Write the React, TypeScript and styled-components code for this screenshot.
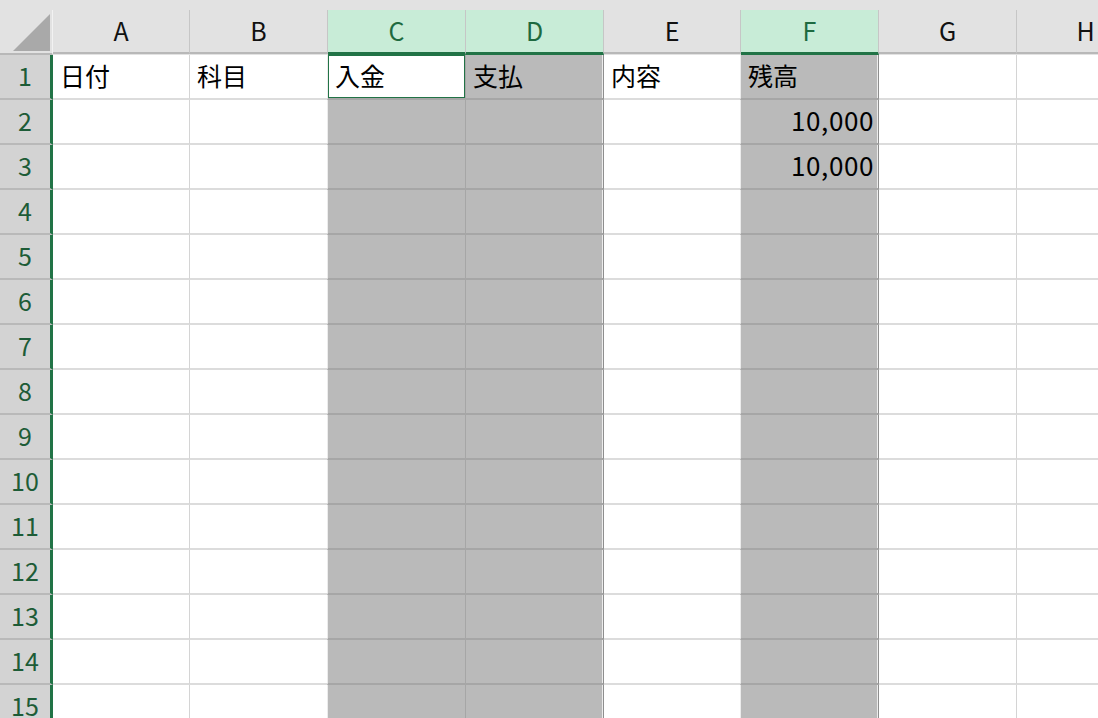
import React from "react";
import styled, { createGlobalStyle } from "styled-components";

const GlobalStyle = createGlobalStyle`
  html, body {
    margin: 0;
    padding: 0;
    background: #ffffff;
    overflow: hidden;
  }
  body {
    font-family: "Noto Sans CJK JP", "Noto Sans", sans-serif;
  }
`;

interface IColumn {
  name: string;
  width: number;
  selected: boolean;
  edgeL?: boolean;
  edgeR?: boolean;
}

const columns: Array<IColumn> = [
  { name: "A", width: 137, selected: false },
  { name: "B", width: 138, selected: false },
  { name: "C", width: 138, selected: true, edgeL: true },
  { name: "D", width: 138, selected: true, edgeR: true },
  { name: "E", width: 137, selected: false },
  { name: "F", width: 138, selected: true, edgeL: true, edgeR: true },
  { name: "G", width: 138, selected: false },
  { name: "H", width: 138, selected: false },
];

const data: Record<number, Record<string, string>> = {
  1: { A: "日付", B: "科目", C: "入金", D: "支払", E: "内容", F: "残高" },
  2: { F: "10,000" },
  3: { F: "10,000" },
};

const numeric = (v: string) => /^[\d,]+$/.test(v);

const Viewport = styled.div`
  width: 100vw;
  height: 100vh;
  overflow: hidden;
`;

const Sheet = styled.div`
  display: grid;
  grid-template-columns: 53px ${columns.map((c) => c.width + "px").join(" ")};
  grid-template-rows: 55px;
  grid-auto-rows: 45px;
  width: max-content;
  font-size: 25px;
  color: #000;
`;

const Corner = styled.div`
  background: #e2e2e2;
  padding-top: 10px;
  display: flex;
`;

const CornerInner = styled.div`
  flex: 1;
  display: flex;
  align-items: flex-end;
  justify-content: flex-end;
  padding: 0 2px 2px 0;
  border-right: 1px solid #f2f2f2;
  border-bottom: 2px solid #b8b8b8;
`;

const Triangle = styled.div`
  width: 0;
  height: 0;
  border-left: 37px solid transparent;
  border-bottom: 37px solid #a9a9a9;
`;

const ColHead = styled.div`
  background: #e2e2e2;
  padding-top: 10px;
  display: flex;
`;

const ColLabel = styled.div<{ $sel: boolean }>`
  flex: 1;
  display: flex;
  align-items: center;
  justify-content: center;
  background: ${(p) => (p.$sel ? "#c8ecd7" : "#e2e2e2")};
  color: ${(p) => (p.$sel ? "#1e6a40" : "#111")};
  border-right: 1px solid #c6c6c6;
  border-bottom: ${(p) => (p.$sel ? "3px solid #217346" : "2px solid #b8b8b8")};
  margin-bottom: ${(p) => (p.$sel ? "0" : "1px")};
  font-size: 25px;
  padding-bottom: 2px;
`;

const RowHead = styled.div`
  background: #d3d3d3;
  color: #1d5c37;
  border-right: 3px solid #217346;
  border-bottom: 2px solid #b9b9b9;
  display: flex;
  align-items: center;
  justify-content: center;
  font-size: 25px;
  padding-bottom: 3px;
`;

const Cell = styled.div<{
  $sel: boolean;
  $active: boolean;
  $right: boolean;
  $edgeL?: boolean;
  $edgeR?: boolean;
}>`
  background: ${(p) => (p.$active ? "#fff" : p.$sel ? "#bababa" : "#fff")};
  border-right: 1px solid ${(p) => (p.$edgeR ? "#8e8e8e" : p.$sel ? "#a6a6a6" : "#d4d4d4")};
  border-left: ${(p) => (p.$edgeL ? "1px solid #ececec" : "none")};
  border-bottom: 2px solid ${(p) => (p.$sel ? "#a6a6a6" : "#dcdcdc")};
  box-shadow: ${(p) =>
    p.$active
      ? "inset 0 0 0 1px #217346"
      : p.$edgeR
      ? "inset -1px 0 0 #ececec"
      : "none"};
  display: flex;
  align-items: center;
  justify-content: ${(p) => (p.$right ? "flex-end" : "flex-start")};
  padding: ${(p) => (p.$right ? "0 4px 4px 0" : "0 0 4px 7px")};
  font-size: ${(p) => (p.$right ? "26px" : "25px")};
  letter-spacing: ${(p) => (p.$right ? "0.6px" : "0")};
  white-space: nowrap;
  overflow: hidden;
  margin-left: ${(p) => (p.$edgeL ? "-1px" : "0")};
`;

const rows = Array.from({ length: 15 }, (_, i) => i + 1);

const App = () => {
  return (
    <Viewport>
      <GlobalStyle />
      <Sheet>
        <Corner>
          <CornerInner>
            <Triangle />
          </CornerInner>
        </Corner>
        {columns.map((c) => (
          <ColHead key={c.name}>
            <ColLabel $sel={c.selected}>{c.name}</ColLabel>
          </ColHead>
        ))}
        {rows.map((r) => (
          <React.Fragment key={r}>
            <RowHead>{r}</RowHead>
            {columns.map((c) => {
              const value = (data[r] && data[r][c.name]) || "";
              return (
                <Cell
                  key={c.name + r}
                  $sel={c.selected}
                  $active={r === 1 && c.name === "C"}
                  $right={numeric(value)}
                  $edgeL={c.edgeL}
                  $edgeR={c.edgeR}
                >
                  {value}
                </Cell>
              );
            })}
          </React.Fragment>
        ))}
      </Sheet>
    </Viewport>
  );
};

export default App;
